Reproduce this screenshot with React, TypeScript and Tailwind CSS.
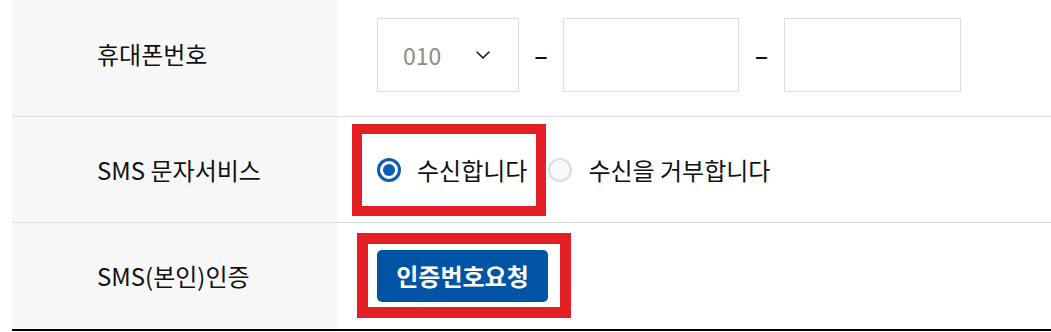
import { ChevronDown } from "lucide-react"

const font = { fontFamily: '"Noto Sans CJK KR", "Noto Sans", sans-serif' }

function Label({ text }: { text: string }) {
  return (
    <div className="flex w-[325px] shrink-0 items-center bg-[#f7f7f7] pl-[85px] text-[24px] text-[#111]">
      {text}
    </div>
  )
}

function Radio({ checked, label }: { checked?: boolean; label: string }) {
  return (
    <label className="flex items-center gap-[16px]">
      {checked ? (
        <span className="flex h-[24px] w-[24px] items-center justify-center rounded-full border-[3px] border-[#0b5cb3] bg-white">
          <span className="h-[12px] w-[12px] rounded-full bg-[#0b5cb3]" />
        </span>
      ) : (
        <span className="h-[24px] w-[24px] rounded-full border-2 border-[#dcdcdc] bg-[#f9f9f9]" />
      )}
      <span className="text-[24px] text-[#111]">{label}</span>
    </label>
  )
}

export default function App() {
  return (
    <div className="h-[332px] w-[1051px] bg-white pl-[12px]" style={font}>
      {/* 휴대폰번호 */}
      <div className="flex h-[117px] border-b border-[#dcdcdc]">
        <div className="flex w-[325px] shrink-0 items-center bg-[#f7f7f7] pb-[8px] pl-[85px] text-[24px] text-[#111]">
          휴대폰번호
        </div>
        <div className="flex flex-1 items-center pb-[6px] pl-[40px]">
          <div className="flex h-[74px] w-[142px] items-center justify-between border border-[#dddddd] pl-[25px] pr-[23px]">
            <span className="text-[23px] text-[#8c8c8c]">010</span>
            <ChevronDown className="h-[24px] w-[24px] text-[#111]" strokeWidth={1.5} />
          </div>
          <span className="w-[44px] text-center text-[25px] font-medium text-[#111]">–</span>
          <input className="h-[74px] w-[176px] border border-[#dddddd] outline-none" />
          <span className="w-[45px] text-center text-[25px] font-medium text-[#111]">–</span>
          <input className="h-[74px] w-[177px] border border-[#dddddd] outline-none" />
        </div>
      </div>

      {/* SMS 문자서비스 */}
      <div className="flex h-[106px] border-b border-[#dcdcdc]">
        <Label text="SMS 문자서비스" />
        <div className="flex flex-1 items-center gap-[21px] pl-[40px]">
          <div className="relative">
            <Radio checked label="수신합니다" />
            <span className="absolute -inset-y-[28px] -left-[25px] -right-[19px] border-[10px] border-[#e41e25]" />
          </div>
          <Radio label="수신을 거부합니다" />
        </div>
      </div>

      {/* SMS(본인)인증 */}
      <div className="flex h-[108px] border-b-2 border-black">
        <Label text="SMS(본인)인증" />
        <div className="flex flex-1 items-center pl-[40px]">
          <div className="relative">
            <button className="h-[52px] w-[171px] rounded-[5px] bg-[#0054a6] text-[24px] font-bold text-white">
              인증번호요청
            </button>
            <span className="absolute -bottom-[16px] -left-[20px] -right-[23px] -top-[17px] border-[11px] border-[#e41e25]" />
          </div>
        </div>
      </div>
    </div>
  )
}
